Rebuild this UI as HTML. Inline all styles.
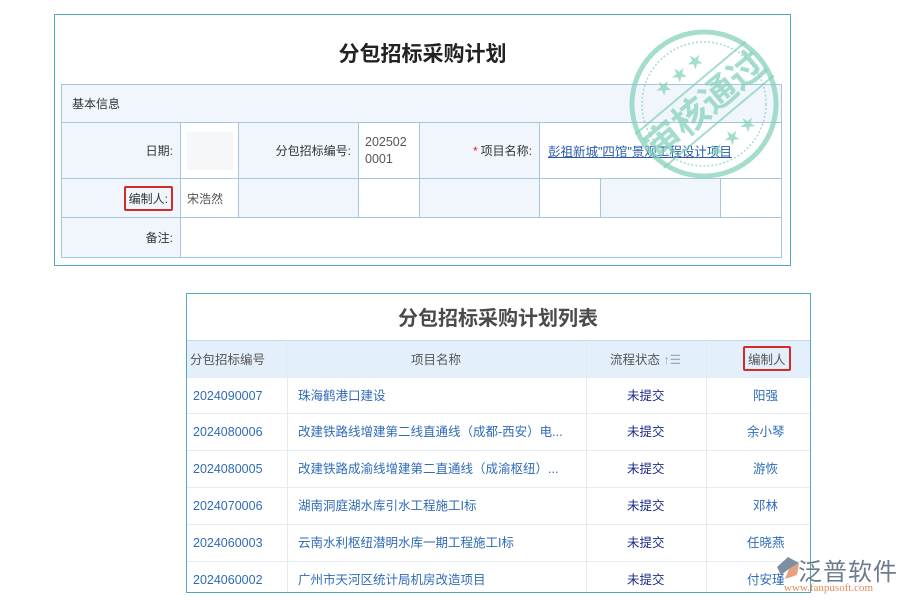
<!DOCTYPE html>
<html><head><meta charset="utf-8"><style>
*{margin:0;padding:0;box-sizing:border-box}
body{width:900px;height:600px;background:#fff;position:relative;overflow:hidden;font-family:"Liberation Sans","Noto Sans CJK SC",sans-serif;font-size:12px;color:#333}
.a{position:absolute}
.c{position:absolute;border:1px solid #a6c6de;display:flex;align-items:center}
.l{background:#f1f6fd;justify-content:flex-end;padding-right:7px}
.v{background:#fff;padding-left:6px}
.r{position:absolute;left:187px;width:623px;height:37px;border-top:1px solid #e6ecf2;color:#2f6bb8;font-size:12.5px}
.r span{position:absolute;top:0;height:36px;line-height:36px}
</style></head><body>
<div class="a" style="left:54px;top:14px;width:737px;height:252px;border:1px solid #4fa9b9"></div>
<div class="a" style="left:54px;top:38px;width:737px;text-align:center;font-size:21px;font-weight:bold;color:#222">分包招标采购计划</div>
<div class="c l" style="left:61px;top:84px;width:721px;height:39px;justify-content:flex-start;padding-left:10px;color:#333">基本信息</div>
<div class="c l" style="left:61px;top:122px;width:120px;height:57px">日期:</div>
<div class="c v" style="left:180px;top:122px;width:59px;height:57px"><div style="width:46px;height:38px;background:#f6f7f8"></div></div>
<div class="c l" style="left:238px;top:122px;width:121px;height:57px">分包招标编号:</div>
<div class="c v" style="left:358px;top:122px;width:62px;height:57px;line-height:17px;color:#555;font-size:12.5px">202502<br>0001</div>
<div class="c l" style="left:419px;top:122px;width:121px;height:57px"><span style="color:#e02020;margin-right:3px">*</span>项目名称:</div>
<div class="c v" style="left:539px;top:122px;width:243px;height:57px;padding-left:8px;color:#2a5aa8;text-decoration:underline;font-size:12.5px">彭祖新城"四馆"景观工程设计项目</div>
<div class="c l" style="left:61px;top:178px;width:120px;height:40px"><span style="border:2px solid #d42a2a;border-radius:2px;padding:2px 3px">编制人:</span></div>
<div class="c v" style="left:180px;top:178px;width:59px;height:40px;color:#555">宋浩然</div>
<div class="c l" style="left:238px;top:178px;width:121px;height:40px"></div>
<div class="c v" style="left:358px;top:178px;width:62px;height:40px"></div>
<div class="c l" style="left:419px;top:178px;width:121px;height:40px"></div>
<div class="c v" style="left:539px;top:178px;width:62px;height:40px"></div>
<div class="c l" style="left:600px;top:178px;width:121px;height:40px"></div>
<div class="c v" style="left:720px;top:178px;width:62px;height:40px"></div>
<div class="c l" style="left:61px;top:217px;width:120px;height:41px">备注:</div>
<div class="c v" style="left:180px;top:217px;width:602px;height:41px"></div>
<svg class="a" style="left:627px;top:27px" width="154" height="154" viewBox="0 0 154 154">
<g fill="none" stroke="#7fd0b8" opacity=".7">
<circle cx="77" cy="77" r="72" stroke-width="5"/>
<circle cx="77" cy="77" r="62" stroke-width="1.5" stroke-dasharray="2 2"/>
</g>
<g transform="rotate(-40 77 77)" opacity=".7">
<line x1="5" y1="56" x2="149" y2="56" stroke="#7fd0b8" stroke-width="2"/>
<line x1="5" y1="100" x2="149" y2="100" stroke="#7fd0b8" stroke-width="2"/>
<text x="77" y="91" text-anchor="middle" font-size="36" font-weight="bold" fill="#7fd0b8" font-family="Noto Sans CJK SC,sans-serif">审核通过</text>
<text x="77" y="44" text-anchor="middle" font-size="16" fill="#7fd0b8">★ ★ ★</text>
<text x="77" y="126" text-anchor="middle" font-size="16" fill="#7fd0b8">★ ★ ★</text>
</g>
</svg>
<div class="a" style="left:186px;top:293px;width:625px;height:300px;border:1px solid #4fa9b9"></div>
<div class="a" style="left:186px;top:302px;width:624px;text-align:center;font-size:20px;font-weight:bold;color:#4a4a4a">分包招标采购计划列表</div>
<div class="a" style="left:187px;top:340px;width:623px;height:37px;background:#e3effa;border-top:1px solid #c5dbec;color:#555;font-size:12.5px">
<span class="a" style="left:3px;top:8px">分包招标编号</span>
<span class="a" style="left:224px;top:8px">项目名称</span>
<span class="a" style="left:423px;top:8px">流程状态 <span style="color:#9ab">↑☰</span></span>
<span class="a" style="left:556px;top:5px;border:2px solid #d42a2a;border-radius:2px;padding:1px 3px">编制人</span>
</div>
<div class="a" style="left:287px;top:340px;width:1px;height:252px;background:#e3eaf0"></div>
<div class="a" style="left:586px;top:340px;width:1px;height:252px;background:#e3eaf0"></div>
<div class="a" style="left:706px;top:340px;width:1px;height:252px;background:#e3eaf0"></div>
<div class="r" style="top:377px"><span style="left:6px">2024090007</span><span style="left:111px">珠海鹤港口建设</span><span style="left:440px;color:#1d2a8c">未提交</span><span style="left:566px">阳强</span></div>
<div class="r" style="top:413px"><span style="left:6px">2024080006</span><span style="left:111px">改建铁路线增建第二线直通线（成都-西安）电...</span><span style="left:440px;color:#1d2a8c">未提交</span><span style="left:560px">余小琴</span></div>
<div class="r" style="top:450px"><span style="left:6px">2024080005</span><span style="left:111px">改建铁路成渝线增建第二直通线（成渝枢纽）...</span><span style="left:440px;color:#1d2a8c">未提交</span><span style="left:566px">游恢</span></div>
<div class="r" style="top:487px"><span style="left:6px">2024070006</span><span style="left:111px">湖南洞庭湖水库引水工程施工I标</span><span style="left:440px;color:#1d2a8c">未提交</span><span style="left:566px">邓林</span></div>
<div class="r" style="top:524px"><span style="left:6px">2024060003</span><span style="left:111px">云南水利枢纽潜明水库一期工程施工I标</span><span style="left:440px;color:#1d2a8c">未提交</span><span style="left:560px">任晓燕</span></div>
<div class="r" style="top:561px"><span style="left:6px">2024060002</span><span style="left:111px">广州市天河区统计局机房改造项目</span><span style="left:440px;color:#1d2a8c">未提交</span><span style="left:560px">付安瑾</span></div>
<svg class="a" style="left:775px;top:555px" width="26" height="26" viewBox="0 0 26 26"><path d="M13 2 L24 8 L14 14 L6 20 L2 12 Z" fill="#7e8ea3"/><path d="M14 14 L24 8 L22 20 L10 24 Z" fill="#e7a080"/></svg>
<div class="a" style="left:798px;top:552px;font-size:24px;color:#6b7b90;letter-spacing:1px">泛普软件</div>
<div class="a" style="left:784px;top:582px;font-size:11px;color:#e58a5a;font-family:'Liberation Serif',serif">www.fanpusoft.com</div>
</body></html>
